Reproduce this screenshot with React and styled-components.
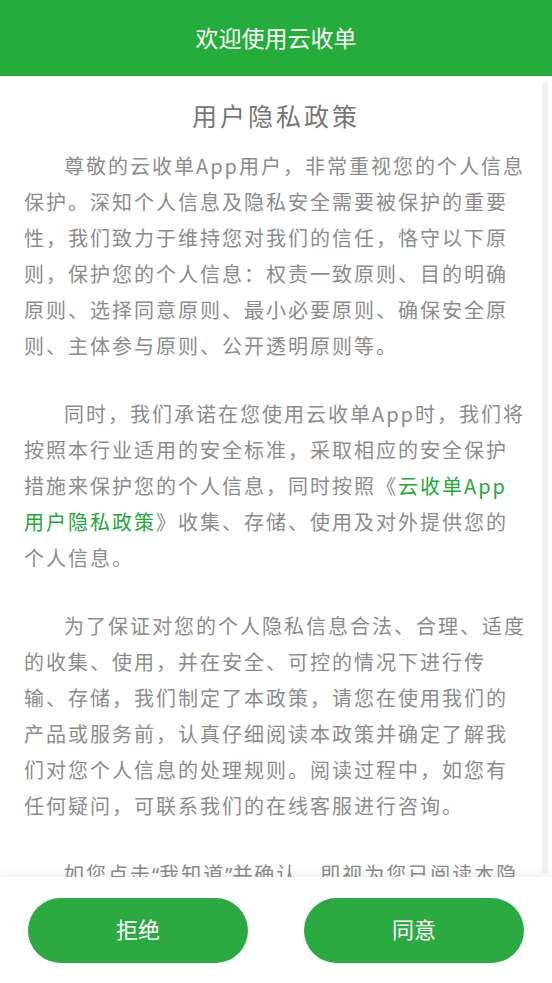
import React from "react";
import styled, { createGlobalStyle } from "styled-components";

const GlobalStyle = createGlobalStyle`
  html, body { margin: 0; padding: 0; height: 100%; }
  body {
    font-family: "Noto Sans CJK SC", "Noto Sans", "Liberation Sans", sans-serif;
    background: #ffffff;
  }
  #root { height: 100%; }
`;

const Page = styled.div`
  display: flex;
  flex-direction: column;
  height: 100vh;
  overflow: hidden;
  position: relative;
`;

const Header = styled.header`
  flex: 0 0 76px;
  display: flex;
  align-items: center;
  justify-content: center;
  background: #25ad3b;
  color: #ffffff;
  font-size: 23px;
  padding-bottom: 2px;
  box-sizing: border-box;
`;

const Main = styled.main`
  flex: 1 1 auto;
  overflow: hidden;
  position: relative;
  padding: 20px 24px 0 24px;
`;

const ScrollThumb = styled.div`
  position: absolute;
  top: 7px;
  bottom: 4px;
  right: 4px;
  width: 6px;
  background: #f1f1f1;
`;

const Title = styled.h1`
  margin: 0 0 14px 0;
  text-align: center;
  font-size: 25px;
  line-height: 38px;
  font-weight: 400;
  color: #777777;
  letter-spacing: 3px;
`;

const Para = styled.p`
  margin: 0 0 32px 0;
  font-size: 20px;
  line-height: 36px;
  letter-spacing: 2px;
  color: #8c8c8c;
  text-indent: 2em;
  text-align: left;
`;

const Link = styled.span`
  color: #22a83a;
`;

const Quote = styled.span`
  font-family: "Noto Sans", "Liberation Sans", sans-serif;
  letter-spacing: 0;
`;

const Footer = styled.footer`
  flex: 0 0 106px;
  display: flex;
  align-items: flex-start;
  justify-content: space-between;
  padding: 21px 28px 0 28px;
  box-sizing: border-box;
  background: #ffffff;
  box-shadow: 0 -4px 10px rgba(0, 0, 0, 0.06);
  position: relative;
  z-index: 1;
`;

const Button = styled.button`
  width: 220px;
  height: 65px;
  padding: 0 0 6px 0;
  border: none;
  border-radius: 33px;
  background: #2aaa40;
  color: #ffffff;
  font-family: inherit;
  font-size: 22px;
  line-height: 30px;
  cursor: pointer;
`;

export default function App() {
  return (
    <>
      <GlobalStyle />
      <Page>
        <Header>欢迎使用云收单</Header>
        <Main>
          <ScrollThumb />
          <Title>用户隐私政策</Title>
          <Para>
            尊敬的云收单App用户，非常重视您的个人信息保护。深知个人信息及隐私安全需要被保护的重要性，我们致力于维持您对我们的信任，恪守以下原则，保护您的个人信息：权责一致原则、目的明确原则、选择同意原则、最小必要原则、确保安全原则、主体参与原则、公开透明原则等。
          </Para>
          <Para>
            同时，我们承诺在您使用云收单App时，我们将按照本行业适用的安全标准，采取相应的安全保护措施来保护您的个人信息，同时按照《<Link>云收单App用户隐私政策</Link>》收集、存储、使用及对外提供您的个人信息。
          </Para>
          <Para>
            为了保证对您的个人隐私信息合法、合理、适度的收集、使用，并在安全、可控的情况下进行传输、存储，我们制定了本政策，请您在使用我们的产品或服务前，认真仔细阅读本政策并确定了解我们对您个人信息的处理规则。阅读过程中，如您有任何疑问，可联系我们的在线客服进行咨询。
          </Para>
          <Para>
            如您点击<Quote>“</Quote>我知道<Quote>”</Quote>并确认，即视为您已阅读本隐私政策并同意上述内容。
          </Para>
        </Main>
        <Footer>
          <Button>拒绝</Button>
          <Button>同意</Button>
        </Footer>
      </Page>
    </>
  );
}
